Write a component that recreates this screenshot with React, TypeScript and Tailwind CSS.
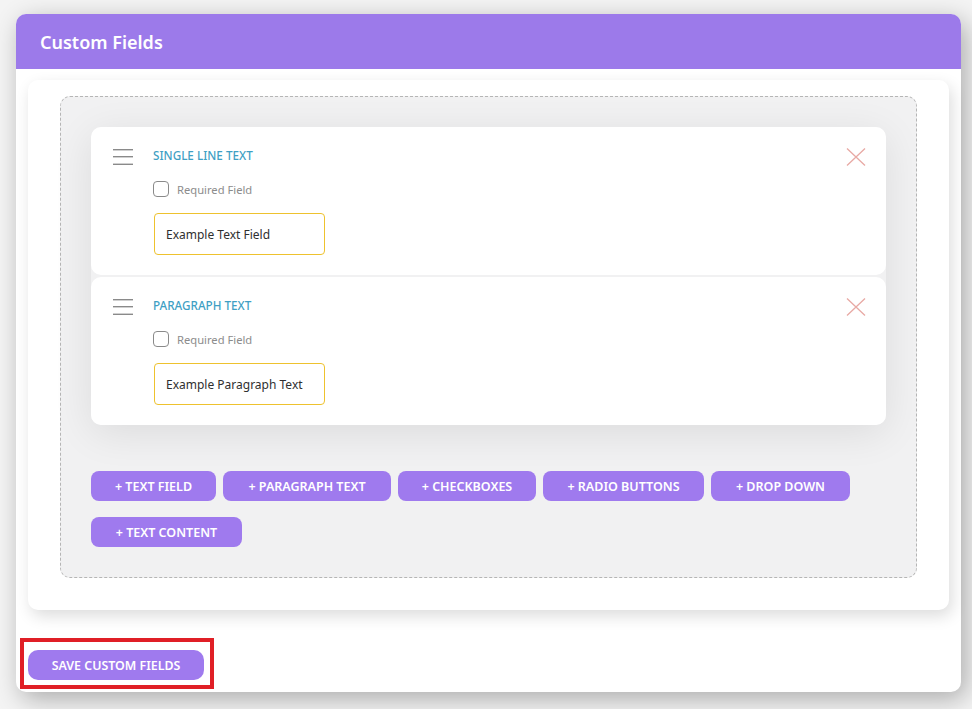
import React from "react";

function MenuIcon(): React.ReactElement {
    return (
        <svg width="20" height="16" viewBox="0 0 20 16" className="shrink-0 mt-[2px]">
            <rect x="0" y="0" width="20" height="1.4" fill="#8a8a8a" />
            <rect x="0" y="7" width="20" height="1.4" fill="#8a8a8a" />
            <rect x="0" y="14.6" width="20" height="1.4" fill="#8a8a8a" />
        </svg>
    );
}

function CloseIcon(): React.ReactElement {
    return (
        <svg width="20" height="20" viewBox="0 0 20 20" className="shrink-0">
            <path d="M1 1.5 L19 18.5 M19 1.5 L1 18.5" stroke="#e8a9a4" strokeWidth="1.3" fill="none" />
        </svg>
    );
}

function FieldCard({ title, value }: { title: string; value: string }): React.ReactElement {
    return (
        <div className="h-[148px] bg-white rounded-[10px] pl-[22px] pr-[20px] pt-[20px] flex gap-[20px]">
            <MenuIcon />
            <div className="flex-1 flex flex-col">
                <div className="h-[20px] flex justify-between items-start">
                    <div className="text-[11.7px] leading-[16px] font-medium text-[#3f9fc4] uppercase">{title}</div>
                    <CloseIcon />
                </div>
                <div className="h-[16px] flex items-center gap-[8px] mt-[14px]">
                    <div className="w-[16px] h-[16px] border border-[#8a8a8a] rounded-[4px] bg-white" />
                    <span className="text-[11.2px] leading-[16px] pt-[1px] text-[#8c8c8c]">Required Field</span>
                </div>
                <div className="mt-[16px] ml-[1px] w-[171px] h-[42px] pt-[1px] border border-[#eec22e] rounded-[4px] pl-[11px] flex items-center text-[12px] text-[#2f2f2f]">
                    {value}
                </div>
            </div>
        </div>
    );
}

function AddButton({ label, width }: { label: string; width: string }): React.ReactElement {
    return (
        <button className={`h-[30px] pt-[2px] bg-[#9f7aee] rounded-[8px] text-white text-[12.5px] font-semibold uppercase whitespace-nowrap ${width}`}>
            {label}
        </button>
    );
}

export default function App(): React.ReactElement {
    return (
        <div className="relative w-[972px] h-[709px] overflow-hidden bg-[#f4f4f4] pt-[14px] pl-[16px] font-['Noto_Sans',sans-serif]">
            <div className="w-[945px] h-[678px] bg-white rounded-[10px] shadow-[5px_7px_26px_rgba(0,0,0,0.3)]">
                <div className="h-[55px] pt-[1px] bg-[#9c7aea] rounded-t-[10px] pl-[24px] flex items-center text-white text-[18px] font-semibold">
                    Custom Fields
                </div>
                <div className="ml-[12px] mt-[11px] w-[921px] h-[530px] bg-white rounded-[10px] shadow-[3px_6px_16px_rgba(0,0,0,0.14)] pt-[16px] pl-[32px]">
                    <div className="w-[857px] h-[482px] bg-[#f1f1f2] border border-dashed border-[#b5b5b5] rounded-[10px] pt-[30px] px-[30px]">
                        <div className="flex flex-col gap-[2px] rounded-[10px] shadow-[0_8px_40px_rgba(0,0,0,0.09)] mb-[46px]">
                            <FieldCard title="Single Line Text" value="Example Text Field" />
                            <FieldCard title="Paragraph Text" value="Example Paragraph Text" />
                        </div>
                        <div className="flex flex-wrap gap-x-[7px] gap-y-[16px] w-[780px]">
                            <AddButton label="+ Text Field" width="w-[125px]" />
                            <AddButton label="+ Paragraph Text" width="w-[168px]" />
                            <AddButton label="+ Checkboxes" width="w-[138px]" />
                            <AddButton label="+ Radio Buttons" width="w-[161px]" />
                            <AddButton label="+ Drop Down" width="w-[139px]" />
                            <AddButton label="+ Text Content" width="w-[151px]" />
                        </div>
                    </div>
                </div>
                <div className="pl-[12px] pt-[40px]">
                    <button className="h-[30px] pt-[2px] w-[176px] bg-[#9f7aee] rounded-[10px] text-white text-[12.4px] font-semibold uppercase whitespace-nowrap">
                        Save Custom Fields
                    </button>
                </div>
            </div>
            <div className="absolute left-[20px] top-[638px] w-[194px] h-[51px] border-[4px] border-[#e01f26] pointer-events-none" />
        </div>
    );
}
